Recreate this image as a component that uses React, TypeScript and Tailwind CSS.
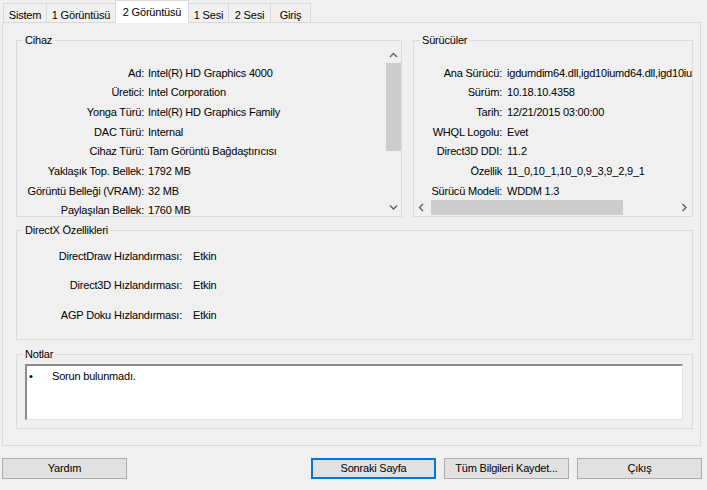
import React from 'react';

const cihaz: [string, string][] = [
  ['Ad:', 'Intel(R) HD Graphics 4000'],
  ['Üretici:', 'Intel Corporation'],
  ['Yonga Türü:', 'Intel(R) HD Graphics Family'],
  ['DAC Türü:', 'Internal'],
  ['Cihaz Türü:', 'Tam Görüntü Bağdaştırıcısı'],
  ['Yaklaşık Top. Bellek:', '1792 MB'],
  ['Görüntü Belleği (VRAM):', '32 MB'],
  ['Paylaşılan Bellek:', '1760 MB'],
];

const suruculer: [string, string][] = [
  ['Ana Sürücü:', 'igdumdim64.dll,igd10iumd64.dll,igd10iumd64.dll'],
  ['Sürüm:', '10.18.10.4358'],
  ['Tarih:', '12/21/2015 03:00:00'],
  ['WHQL Logolu:', 'Evet'],
  ['Direct3D DDI:', '11.2'],
  ['Özellik', '11_0,10_1,10_0,9_3,9_2,9_1'],
  ['Sürücü Modeli:', 'WDDM 1.3'],
];

const directx: [string, string][] = [
  ['DirectDraw Hızlandırması:', 'Etkin'],
  ['Direct3D Hızlandırması:', 'Etkin'],
  ['AGP Doku Hızlandırması:', 'Etkin'],
];

const tabs = [
  { name: 'Sistem', w: 'w-[44px]' },
  { name: '1 Görüntüsü', w: 'w-[70px]' },
  { name: '2 Görüntüsü', w: 'w-[74px]', active: true },
  { name: '1 Sesi', w: 'w-[41px]' },
  { name: '2 Sesi', w: 'w-[43px]' },
  { name: 'Giriş', w: 'w-[41px]' },
];

const Chevron = ({ dir }: { dir: 'up' | 'down' | 'left' | 'right' }) => {
  const d = {
    up: 'M1 5 L4.5 1.5 L8 5',
    down: 'M1 1.5 L4.5 5 L8 1.5',
    left: 'M5 1 L1.5 4.5 L5 8',
    right: 'M1.5 1 L5 4.5 L1.5 8',
  }[dir];
  const horiz = dir === 'up' || dir === 'down';
  return (
    <svg width={horiz ? 9 : 7} height={horiz ? 7 : 9} viewBox={horiz ? '0 0 9 7' : '0 0 7 9'}>
      <path d={d} fill="none" stroke="#606060" strokeWidth="1.4" />
    </svg>
  );
};

const Legend = ({ children }: { children: React.ReactNode }) => (
  <legend className="ml-[6px] px-[2px] leading-[13px]">{children}</legend>
);

const Button = ({ label, className = '' }: { label: string; className?: string }) => (
  <div className={`h-[21px] w-[125px] flex items-center justify-center bg-[#e1e1e1] ${className}`}>
    {label}
  </div>
);

export default function App() {
  return (
    <div className="w-[707px] h-[490px] overflow-hidden bg-[#f0f0f0] text-[11px] tracking-[-0.2px] text-black font-['Liberation_Sans',Arial,sans-serif]">
      {/* sekmeler */}
      <div className="flex h-[22px] items-end pl-[3px]">
        {tabs.map((t, i) =>
          t.active ? (
            <div
              key={t.name}
              className={`${t.w} ${i ? '-ml-px' : ''} relative z-10 -mb-px h-[23px] flex items-start justify-center pt-[3px] bg-white border border-b-0 border-[#d9d9d9]`}
            >
              {t.name}
            </div>
          ) : (
            <div
              key={t.name}
              className={`${t.w} ${i ? '-ml-px' : ''} h-[19px] flex items-start justify-center pt-[3px] bg-[#f0f0f0] border border-b-0 border-[#d9d9d9]`}
            >
              {t.name}
            </div>
          )
        )}
      </div>

      {/* sekme paneli */}
      <div className="ml-[2px] w-[699px] h-[424px] border border-[#d9d9d9] pl-[13px]">
        <div className="flex mt-[11px]">
          {/* Cihaz */}
          <fieldset className="min-w-0 shrink-0 w-[386px] h-[183px] border border-[#dcdcdc] overflow-hidden">
            <Legend>Cihaz</Legend>
            <div className="flex h-full w-full">
              <div className="flex-1 min-w-0 overflow-hidden pt-[16px]">
                {cihaz.map(([l, v]) => (
                  <div key={l} className="flex h-[19.7px] items-center whitespace-nowrap">
                    <span className="w-[127px] shrink-0 text-right">{l}</span>
                    <span className="ml-[4px]">{v}</span>
                  </div>
                ))}
              </div>
              <div className="w-[15px] shrink-0 my-[1px] flex flex-col bg-[#f0f0f0]">
                <div className="h-[15px] flex items-center justify-center"><Chevron dir="up" /></div>
                <div className="h-[88px] bg-[#cdcdcd]" />
                <div className="flex-1" />
                <div className="h-[15px] flex items-center justify-center"><Chevron dir="down" /></div>
              </div>
            </div>
          </fieldset>

          {/* Sürücüler */}
          <fieldset className="min-w-0 shrink-0 ml-[11px] w-[280px] h-[183px] border border-[#dcdcdc] overflow-hidden">
            <Legend>Sürücüler</Legend>
            <div className="flex flex-col h-full">
              <div className="flex-1 min-w-0 overflow-hidden pt-[16px]">
                {suruculer.map(([l, v]) => (
                  <div key={l} className="flex h-[19.7px] items-center whitespace-nowrap">
                    <span className="w-[88px] shrink-0 text-right">{l}</span>
                    <span className="ml-[5px]">{v}</span>
                  </div>
                ))}
              </div>
              <div className="h-[15px] mb-[1px] flex items-stretch bg-[#f0f0f0]">
                <div className="w-[15px] flex items-center justify-center"><Chevron dir="left" /></div>
                <div className="ml-[2px] w-[192px] bg-[#cdcdcd]" />
                <div className="flex-1" />
                <div className="w-[15px] flex items-center justify-center"><Chevron dir="right" /></div>
              </div>
            </div>
          </fieldset>
        </div>

        {/* DirectX Özellikleri */}
        <fieldset className="min-w-0 mt-[7px] w-[677px] h-[116px] border border-[#dcdcdc]">
          <Legend>DirectX Özellikleri</Legend>
          <div className="pt-[4px]">
            {directx.map(([l, v]) => (
              <div key={l} className="flex h-[29.5px] items-center whitespace-nowrap">
                <span className="w-[165px] shrink-0 text-right">{l}</span>
                <span className="ml-[11px]">{v}</span>
              </div>
            ))}
          </div>
        </fieldset>

        {/* Notlar */}
        <fieldset className="min-w-0 mt-[8px] w-[677px] h-[81px] border border-[#dcdcdc]">
          <Legend>Notlar</Legend>
          <div className="mt-[3px] ml-[8px] w-[658px] h-[56px] bg-white border-t-2 border-l-2 border-t-[#8c8c8c] border-l-[#8c8c8c] border-r border-b border-r-[#e3e3e3] border-b-[#e3e3e3]">
            <div className="flex pt-[3px] leading-[14px]">
              <span className="ml-[2px] w-[23px]">•</span>
              <span>Sorun bulunmadı.</span>
            </div>
          </div>
        </fieldset>
      </div>

      {/* alt düğmeler */}
      <div className="flex mt-[12px]">
        <Button label="Yardım" className="ml-[2px] border border-[#adadad]" />
        <Button label="Sonraki Sayfa" className="ml-[184px] border-2 border-[#0078d7]" />
        <Button label="Tüm Bilgileri Kaydet..." className="ml-[8px] border border-[#adadad]" />
        <Button label="Çıkış" className="ml-[8px] border border-[#adadad]" />
      </div>
    </div>
  );
}
